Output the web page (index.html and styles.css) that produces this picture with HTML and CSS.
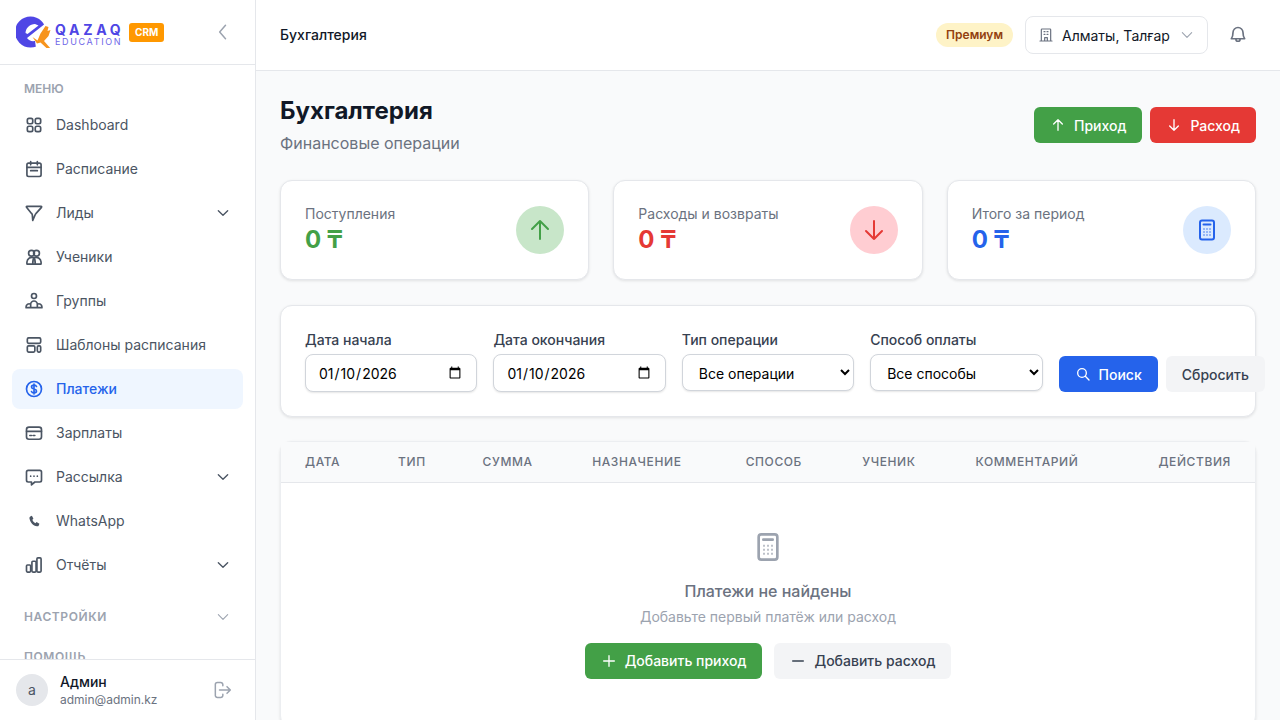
FILE: index.html
```html
<!DOCTYPE html>
<html lang="ru">
<head>
  <meta charset="UTF-8">
  <title>Бухгалтерия</title>
  <link rel="stylesheet" href="styles.css">
</head>
<body>

  <aside class="sidebar">
    <div class="brand">
      <svg class="brand-mark" viewBox="0 0 36 32" width="36" height="32">
        <circle cx="14.500" cy="16" r="15.500" fill="#4f46e5"/>
        <path d="M9.500 17C9.500 12 14 8 19 8l3.500 1.500L11.500 18z" fill="#ffffff"/>
        <path d="M11 22L30 7l3 25H20l-1-7c-3.500.5-6.500-.5-8-3z" fill="#ffffff"/>
        <path d="M16.500 21l5 3.500 3-7 5-7.500 3 1-1 4 3-1-2 6-4.500 5 7 8h-3.500l-7-6.500-3.500 1z" fill="#f7941d"/>
      </svg>
      <div class="brand-name">
        <span class="brand-title">QAZAQ</span>
        <span class="brand-sub">EDUCATION</span>
      </div>
      <span class="crm-badge">CRM</span>
      <svg class="collapse-icon" viewBox="0 0 24 24" width="20" height="20"><path d="M15 4l-7 8 7 8"/></svg>
    </div>

    <nav class="nav">
      <div class="nav-label">Меню</div>
      <div class="nav-list">
        <a class="nav-item">
          <svg class="icon" viewBox="0 0 24 24"><rect x="4" y="4" width="6.500" height="6.500" rx="2"/><rect x="13.500" y="4" width="6.500" height="6.500" rx="2"/><rect x="4" y="13.500" width="6.500" height="6.500" rx="2"/><rect x="13.500" y="13.500" width="6.500" height="6.500" rx="2"/></svg>
          Dashboard
        </a>
        <a class="nav-item">
          <svg class="icon" viewBox="0 0 24 24"><rect x="3.500" y="5" width="17" height="16" rx="2"/><path d="M8 3v4M16 3v4M3.500 10h17M8 14h8"/></svg>
          Расписание
        </a>
        <a class="nav-item">
          <svg class="icon" viewBox="0 0 24 24"><path d="M3.500 4h17c.6 0 .9.7.5 1.200L14.500 12.500c-.5.6-1 1-1.200 1.700L10.500 21l-.5-6.500c0-.8-.4-1.400-1-2L3 5.200C2.600 4.700 2.900 4 3.500 4z"/></svg>
          Лиды
          <svg class="chevron" viewBox="0 0 24 24"><path d="M5 8.500l7 7 7-7"/></svg>
        </a>
        <a class="nav-item">
          <svg class="icon" viewBox="0 0 24 24"><circle cx="9" cy="7.500" r="3.500"/><circle cx="15" cy="7.500" r="3.500"/><path d="M3.500 20.500v-2.500a6 6 0 0 1 8.500-5 6 6 0 0 1 8.500 5v2.500zM12 13c-1.200 1.500-1.500 4-1.500 7.500M12 13c1.200 1.500 1.500 4 1.500 7.500"/></svg>
          Ученики
        </a>
        <a class="nav-item">
          <svg class="icon" viewBox="0 0 24 24"><circle cx="12" cy="6" r="3"/><path d="M8 19v-3a4 4 0 0 1 8 0v3M2.500 20v-1a3.500 3.500 0 0 1 5.500-3M21.500 20v-1a3.500 3.500 0 0 0-5.500-3M2.500 20h19"/></svg>
          Группы
        </a>
        <a class="nav-item">
          <svg class="icon" viewBox="0 0 24 24"><rect x="4" y="3.500" width="16" height="6.500" rx="1.500"/><rect x="4" y="13" width="9" height="7.500" rx="1.500"/><rect x="16" y="13" width="4" height="7.500" rx="1.500"/></svg>
          Шаблоны расписания
        </a>
        <a class="nav-item active">
          <svg class="icon" viewBox="0 0 24 24"><circle cx="12" cy="12" r="9"/><path d="M15 9c-.4-1-1.600-1.700-3-1.700-1.700 0-3 .9-3 2.300 0 3.200 6 1.600 6 4.800 0 1.400-1.300 2.300-3 2.300-1.400 0-2.600-.7-3-1.700M12 6v12"/></svg>
          Платежи
        </a>
        <a class="nav-item">
          <svg class="icon" viewBox="0 0 24 24"><rect x="3" y="5" width="18" height="14.500" rx="3"/><path d="M3 10h18M7 15h2M11 15h2"/></svg>
          Зарплаты
        </a>
        <a class="nav-item">
          <svg class="icon" viewBox="0 0 24 24"><path d="M5 4h14a2 2 0 0 1 2 2v10a2 2 0 0 1-2 2h-6l-4 3.500V18H5a2 2 0 0 1-2-2V6a2 2 0 0 1 2-2z"/><path d="M8 11h.01M12 11h.01M16 11h.01"/></svg>
          Рассылка
          <svg class="chevron" viewBox="0 0 24 24"><path d="M5 8.500l7 7 7-7"/></svg>
        </a>
        <a class="nav-item">
          <svg class="icon icon-solid" viewBox="0 0 24 24"><path d="M7.500 6.500l2-.8 1.800 3.600-1.300 1.300c.6 1.800 1.900 3.200 3.700 4l1.400-1.300 3.400 2-.8 2c-.3.800-1.200 1.200-2.100 1C10.800 17.400 7.500 14 6.500 8.600c-.1-.9.300-1.700 1-2.100z"/></svg>
          WhatsApp
        </a>
        <a class="nav-item">
          <svg class="icon" viewBox="0 0 24 24"><rect x="3" y="12" width="5" height="8.500" rx="1.200"/><rect x="9.500" y="7.500" width="5" height="13" rx="1.200"/><rect x="15.500" y="3.500" width="5" height="17" rx="1.200"/></svg>
          Отчёты
          <svg class="chevron" viewBox="0 0 24 24"><path d="M5 8.500l7 7 7-7"/></svg>
        </a>
      </div>
      <div class="nav-label nav-label-wide nav-section">
        Настройки
        <svg class="chevron chevron-muted" viewBox="0 0 24 24"><path d="M5 8.500l7 7 7-7"/></svg>
      </div>
      <div class="nav-label nav-label-wide nav-help">Помощь</div>
    </nav>

    <div class="user-box">
      <div class="avatar">a</div>
      <div class="user-info">
        <div class="user-name">Админ</div>
        <div class="user-email">admin@admin.kz</div>
      </div>
      <svg class="logout-icon" viewBox="0 0 24 24" width="20" height="20"><path d="M13 7V5.500A2.500 2.500 0 0 0 10.500 3h-4A2.500 2.500 0 0 0 4 5.500v13A2.500 2.500 0 0 0 6.500 21h4a2.500 2.500 0 0 0 2.500-2.500V17M9 12h13M18 8l4 4-4 4"/></svg>
    </div>
  </aside>

  <div class="main">
    <header class="topbar">
      <div class="topbar-title">Бухгалтерия</div>
      <span class="plan-badge">Премиум</span>
      <button class="city-button">
        <svg class="city-icon" viewBox="0 0 24 24" width="16" height="16"><path d="M5 21V4a1 1 0 0 1 1-1h12a1 1 0 0 1 1 1v17M3 21h18M9 7h1.500M13.500 7H15M9 11h1.500M13.500 11H15M10 21v-5h4v5"/></svg>
        Алматы, Талғар
        <svg class="city-chevron" viewBox="0 0 24 24" width="16" height="16"><path d="M5 8.500l7 7 7-7"/></svg>
      </button>
      <svg class="bell-icon" viewBox="0 0 24 24" width="20" height="20"><path d="M12 3a6 6 0 0 0-6 6c0 4-.8 6-2 7.500h16C18.800 15 18 13 18 9a6 6 0 0 0-6-6zM9.500 17a2.500 2.500 0 0 0 5 0"/></svg>
    </header>

    <div class="content">
      <div class="page-head">
        <div>
          <h1>Бухгалтерия</h1>
          <p>Финансовые операции</p>
        </div>
        <div class="page-actions">
          <button class="btn btn-green">
            <svg class="btn-icon" viewBox="0 0 24 24"><path d="M12 20V4M5.500 10.500L12 4l6.500 6.500"/></svg>
            Приход
          </button>
          <button class="btn btn-red">
            <svg class="btn-icon" viewBox="0 0 24 24"><path d="M12 4v16M5.500 13.500L12 20l6.500-6.500"/></svg>
            Расход
          </button>
        </div>
      </div>

      <div class="stats">
        <div class="stat-card">
          <div>
            <div class="stat-label">Поступления</div>
            <div class="stat-value text-green">0 ₸</div>
          </div>
          <div class="stat-bubble bubble-green">
            <svg class="stat-icon" viewBox="0 0 24 24"><path d="M12 21V3M4 11l8-8 8 8"/></svg>
          </div>
        </div>
        <div class="stat-card">
          <div>
            <div class="stat-label">Расходы и возвраты</div>
            <div class="stat-value text-red">0 ₸</div>
          </div>
          <div class="stat-bubble bubble-red">
            <svg class="stat-icon" viewBox="0 0 24 24"><path d="M12 3v18M4 13l8 8 8-8"/></svg>
          </div>
        </div>
        <div class="stat-card">
          <div>
            <div class="stat-label">Итого за период</div>
            <div class="stat-value text-blue">0 ₸</div>
          </div>
          <div class="stat-bubble bubble-blue">
            <svg class="stat-icon" viewBox="0 0 24 24">
              <rect x="5" y="2.500" width="14" height="19" rx="2"/>
              <path d="M8.500 6.500h7"/>
              <path class="calc-dots" d="M8.500 11h1M11.500 11h1M14.500 11h1M8.500 14h1M11.500 14h1M14.500 14h1M8.500 17h1M11.500 17h1M14.500 17h1"/>
            </svg>
          </div>
        </div>
      </div>

      <div class="filter-card">
        <div class="field">
          <label>Дата начала</label>
          <input type="date" value="2026-01-10">
        </div>
        <div class="field">
          <label>Дата окончания</label>
          <input type="date" value="2026-01-10">
        </div>
        <div class="field">
          <label>Тип операции</label>
          <select><option>Все операции</option></select>
        </div>
        <div class="field">
          <label>Способ оплаты</label>
          <select><option>Все способы</option></select>
        </div>
        <div class="filter-actions">
          <button class="btn btn-blue">
            <svg class="btn-icon" viewBox="0 0 24 24"><circle cx="10.500" cy="10.500" r="6.500"/><path d="M15.500 15.500L21 21"/></svg>
            Поиск
          </button>
          <button class="btn btn-gray">Сбросить</button>
        </div>
      </div>

      <div class="table-card">
        <table>
          <thead>
            <tr>
              <th>Дата</th>
              <th>Тип</th>
              <th>Сумма</th>
              <th>Назначение</th>
              <th>Способ</th>
              <th>Ученик</th>
              <th>Комментарий</th>
              <th class="th-right">Действия</th>
            </tr>
          </thead>
          <tbody>
            <tr>
              <td colspan="8">
                <div class="empty">
                  <svg class="empty-icon" viewBox="0 0 24 24" width="32" height="32">
                    <rect x="5" y="2.500" width="14" height="19" rx="2"/>
                    <path d="M8.500 6.500h7"/>
                    <path class="calc-dots" d="M8.500 11h1M11.500 11h1M14.500 11h1M8.500 14h1M11.500 14h1M14.500 14h1M8.500 17h1M11.500 17h1M14.500 17h1"/>
                  </svg>
                  <div class="empty-title">Платежи не найдены</div>
                  <div class="empty-sub">Добавьте первый платёж или расход</div>
                  <div class="empty-actions">
                    <button class="btn btn-green">
                      <svg class="btn-icon" viewBox="0 0 24 24"><path d="M12 4v16M4 12h16"/></svg>
                      Добавить приход
                    </button>
                    <button class="btn btn-gray">
                      <svg class="btn-icon" viewBox="0 0 24 24"><path d="M4 12h16"/></svg>
                      Добавить расход
                    </button>
                  </div>
                </div>
              </td>
            </tr>
          </tbody>
        </table>
      </div>
    </div>
  </div>

</body>
</html>
```

FILE: styles.css
```css
* {
  box-sizing: border-box;
}

body {
  margin: 0;
  height: 720px;
  display: flex;
  overflow: hidden;
  background-color: #f9fafb;
  font-family: Inter, "Noto Sans", sans-serif;
  color: #111827;
}

svg {
  fill: none;
  stroke: currentColor;
  stroke-width: 2;
  stroke-linecap: round;
  stroke-linejoin: round;
  flex-shrink: 0;
}

button {
  font-family: inherit;
}

/* sidebar */

.sidebar {
  width: 256px;
  flex-shrink: 0;
  display: flex;
  flex-direction: column;
  background: #ffffff;
  border-right: 1px solid #e5e7eb;
}

.brand {
  height: 65px;
  flex-shrink: 0;
  display: flex;
  align-items: center;
  padding: 0 22px 0 16px;
  border-bottom: 1px solid #e5e7eb;
}

.brand-mark {
  stroke: none;
  margin-right: 3px;
}

.brand-name {
  display: flex;
  flex-direction: column;
  width: 74px;
  padding-top: 5px;
}

.brand-title {
  font-size: 14px;
  font-weight: 700;
  line-height: 15px;
  letter-spacing: 3.700px;
  color: #4f46e5;
}

.brand-sub {
  font-size: 9px;
  line-height: 10px;
  letter-spacing: 1.650px;
  color: #6f68e8;
}

.crm-badge {
  background: #ff9800;
  color: #ffffff;
  font-size: 10px;
  font-weight: 700;
  line-height: 19px;
  padding: 0 6px;
  border-radius: 3px;
}

.collapse-icon {
  margin-left: auto;
  color: #9ca3af;
  stroke-width: 1.800;
}

.nav {
  flex: 1;
  min-height: 0;
  overflow: hidden;
  padding-top: 16px;
}

.nav-label {
  display: flex;
  align-items: center;
  justify-content: space-between;
  padding: 0 24px;
  font-size: 12px;
  font-weight: 600;
  line-height: 16px;
  text-transform: uppercase;
  color: #9ca3af;
}

.nav-label-wide {
  letter-spacing: 0.6px;
}

.nav-section {
  margin-top: 24px;
}

.nav-help {
  margin-top: 24px;
}

.nav-list {
  display: flex;
  flex-direction: column;
  gap: 4px;
  margin-top: 8px;
  padding: 0 12px;
}

.nav-item {
  height: 40px;
  display: flex;
  align-items: center;
  gap: 12px;
  padding: 0 12px;
  border-radius: 8px;
  font-size: 14px;
  line-height: 20px;
  color: #4b5563;
}

.nav-item.active {
  background: #eff6ff;
  color: #2563eb;
  font-weight: 500;
}

.icon {
  width: 20px;
  height: 20px;
  stroke-width: 2;
}

.icon-solid {
  fill: currentColor;
  stroke: none;
}

.chevron {
  width: 16px;
  height: 16px;
  margin-left: auto;
}

.chevron-muted {
  color: #9ca3af;
  stroke-width: 1.600;
}

.user-box {
  height: 61px;
  flex-shrink: 0;
  display: flex;
  align-items: center;
  gap: 12px;
  padding: 0 23px 0 16px;
  border-top: 1px solid #e5e7eb;
}

.avatar {
  width: 32px;
  height: 32px;
  border-radius: 50%;
  background: #e5e7eb;
  color: #4b5563;
  font-size: 14px;
  line-height: 32px;
  text-align: center;
}

.user-name {
  font-size: 14px;
  font-weight: 500;
  line-height: 20px;
  color: #111827;
}

.user-email {
  font-size: 12px;
  line-height: 16px;
  color: #6b7280;
}

.logout-icon {
  margin-left: auto;
  color: #9ca3af;
  stroke-width: 1.800;
}

/* main */

.main {
  flex: 1;
  min-width: 0;
  display: flex;
  flex-direction: column;
}

.topbar {
  height: 71px;
  flex-shrink: 0;
  display: flex;
  align-items: center;
  padding: 0 32px 0 24px;
  background: #ffffff;
  border-bottom: 1px solid #e5e7eb;
}

.topbar-title {
  font-size: 14px;
  font-weight: 500;
  line-height: 20px;
  margin-right: auto;
}

.plan-badge {
  background: #fef3c7;
  color: #92400e;
  font-size: 12px;
  font-weight: 600;
  line-height: 24px;
  padding: 0 10px;
  border-radius: 12px;
}

.city-button {
  width: 183px;
  height: 38px;
  margin: 0 20px 0 12px;
  display: flex;
  align-items: center;
  gap: 8px;
  padding: 0 12px;
  background: #ffffff;
  border: 1px solid #e5e7eb;
  border-radius: 8px;
  font-size: 14px;
  white-space: nowrap;
  color: #111827;
}

.city-icon {
  color: #6b7280;
  stroke-width: 1.800;
}

.city-chevron {
  margin-left: auto;
  color: #9ca3af;
  stroke-width: 1.600;
}

.bell-icon {
  color: #6b7280;
  stroke-width: 2;
}

.content {
  flex: 1;
  min-height: 0;
  overflow: hidden;
  padding: 24px;
}

.page-head {
  display: flex;
  align-items: center;
  justify-content: space-between;
  margin-bottom: 25px;
}

.page-head h1 {
  margin: 0;
  font-size: 24px;
  font-weight: 700;
  line-height: 32px;
}

.page-head p {
  margin: 4px 0 0 0;
  font-size: 16px;
  line-height: 24px;
  color: #6b7280;
}

.page-actions {
  display: flex;
  gap: 8px;
}

.btn {
  height: 36px;
  display: flex;
  align-items: center;
  gap: 8px;
  padding: 0 16px;
  border: none;
  border-radius: 6px;
  font-size: 14px;
  font-weight: 500;
  white-space: nowrap;
}

.btn-icon {
  width: 16px;
  height: 16px;
  stroke-width: 2;
}

.btn-green {
  background: #43a047;
  color: #ffffff;
}

.btn-red {
  background: #e53935;
  color: #ffffff;
}

.btn-blue {
  background: #2563eb;
  color: #ffffff;
}

.btn-gray {
  background: #f3f4f6;
  color: #374151;
}

/* stat cards */

.stats {
  display: grid;
  grid-template-columns: repeat(3, 1fr);
  gap: 24px;
  margin-bottom: 25px;
}

.stat-card {
  height: 100px;
  display: flex;
  align-items: center;
  justify-content: space-between;
  padding: 0 24px;
  background: #ffffff;
  border: 1px solid #e5e7eb;
  border-radius: 12px;
  box-shadow: 0 1px 3px rgba(0, 0, 0, 0.1);
}

.stat-label {
  font-size: 14px;
  line-height: 20px;
  color: #6b7280;
}

.stat-value {
  font-size: 24px;
  font-weight: 700;
  line-height: 31px;
  padding-bottom: 1px;
}

.text-green {
  color: #43a047;
}

.text-red {
  color: #e53935;
}

.text-blue {
  color: #2563eb;
}

.stat-bubble {
  width: 48px;
  height: 48px;
  display: flex;
  align-items: center;
  justify-content: center;
  border-radius: 50%;
}

.bubble-green {
  background: #c8e6c9;
  color: #43a047;
}

.bubble-red {
  background: #ffcdd2;
  color: #e53935;
}

.bubble-blue {
  background: #dbeafe;
  color: #2563eb;
}

.stat-icon {
  width: 24px;
  height: 24px;
  stroke-width: 2;
}

.calc-dots {
  stroke-width: 1.500;
  stroke-linecap: butt;
}

/* filters */

.filter-card {
  height: 112px;
  display: flex;
  align-items: flex-end;
  gap: 16px;
  padding: 0 24px 24px 24px;
  margin-bottom: 24px;
  background: #ffffff;
  border: 1px solid #e5e7eb;
  border-radius: 12px;
  box-shadow: 0 1px 3px rgba(0, 0, 0, 0.1);
}

.field {
  width: 172.400px;
  flex-shrink: 0;
  display: flex;
  flex-direction: column;
  gap: 4px;
}

.field label {
  font-size: 14px;
  font-weight: 500;
  line-height: 20px;
  color: #374151;
}

.field input,
.field select {
  width: 100%;
  height: 38px;
  font-family: inherit;
  font-size: 14px;
  color: #000000;
  background: #ffffff;
  border: 1px solid #d1d5db;
  border-radius: 8px;
  box-shadow: 0 1px 2px rgba(0, 0, 0, 0.1);
}

.field input {
  padding: 0 12px;
}

.field select {
  height: 37px;
  margin-bottom: 1px;
  padding: 2px 0 0 12px;
}

.filter-actions {
  display: flex;
  flex-shrink: 0;
  gap: 8px;
}

/* table */

.table-card {
  background: #ffffff;
  border: 1px solid #eceef1;
  border-radius: 12px;
  box-shadow: 0 1px 3px rgba(0, 0, 0, 0.1);
}

table {
  width: 100%;
  border-collapse: collapse;
}

th {
  height: 40px;
  padding: 0 24px;
  background: #f9fafb;
  border-bottom: 1px solid #e5e7eb;
  font-size: 12px;
  font-weight: 500;
  letter-spacing: 0.6px;
  text-align: left;
  text-transform: uppercase;
  color: #6b7280;
}

.th-right {
  text-align: right;
}

td {
  padding: 48px 24px;
}

.empty {
  display: flex;
  flex-direction: column;
  align-items: center;
}

.empty-icon {
  color: #9ca3af;
  stroke-width: 2;
}

.empty-title {
  margin-top: 16px;
  font-size: 16px;
  font-weight: 500;
  line-height: 24px;
  color: #6b7280;
}

.empty-sub {
  margin-top: 4px;
  font-size: 14px;
  line-height: 20px;
  color: #9ca3af;
}

.empty-actions {
  display: flex;
  gap: 12px;
  margin-top: 16px;
}
```
